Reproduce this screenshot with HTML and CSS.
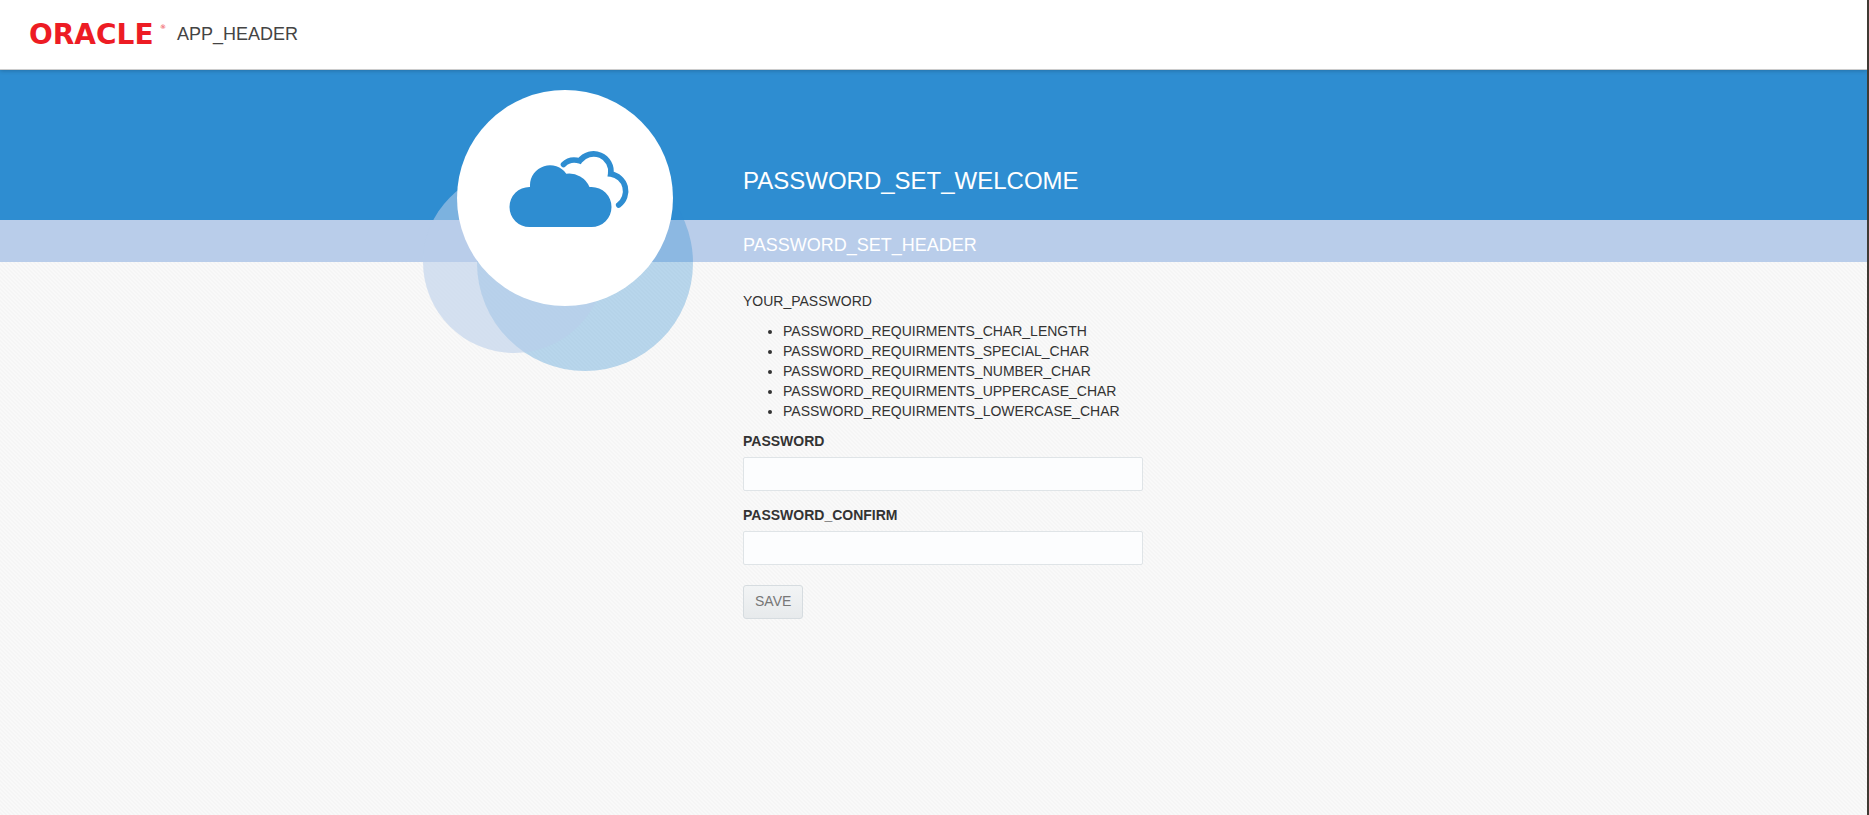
FILE: index.html
```html
<!DOCTYPE html>
<html lang="en">
<head>
<meta charset="utf-8">
<title>APP_HEADER</title>
<link rel="stylesheet" href="styles.css">
</head>
<body>
<header class="site-header">
  <svg class="brand" viewBox="0 0 136 28" role="img" aria-label="Oracle">
    <text class="brand-name" x="0" y="24">ORACLE</text>
    <text class="brand-mark" x="131" y="9">®</text>
  </svg>
  <span class="app-name">APP_HEADER</span>
</header>
<main>
  <section class="welcome">
    <div class="container">
      <svg class="art" viewBox="0 0 270 281" aria-hidden="true">
        <circle cx="162" cy="173" r="108" fill="#2e8dd1" fill-opacity=".32"/>
        <circle cx="91" cy="172" r="91" fill="#b9cdea" fill-opacity=".57"/>
        <circle cx="142" cy="108" r="108" fill="#fff"/>
        <path fill="#2e8dd1" d="M106.500 137a20 20 0 0 1 0-40h.5v-2a20 20 0 0 1 36.300-11.300a22 22 0 0 1 23.200 13.300h2a20 20 0 0 1 0 40z"/>
        <path fill="none" stroke="#2e8dd1" stroke-width="5.600" stroke-linecap="round" d="M140.500 74.500c4-4 10-5.500 16.200-3.600a17.300 17.300 0 0 1 31 13.100a17.300 17.300 0 0 1 8 31"/>
      </svg>
      <h1 class="welcome-title">PASSWORD_SET_WELCOME</h1>
    </div>
  </section>
  <section class="band">
    <div class="container">
      <h2 class="band-title">PASSWORD_SET_HEADER</h2>
    </div>
  </section>
  <div class="container">
    <form class="form">
      <p class="intro">YOUR_PASSWORD</p>
      <ul class="rules">
        <li>PASSWORD_REQUIRMENTS_CHAR_LENGTH</li>
        <li>PASSWORD_REQUIRMENTS_SPECIAL_CHAR</li>
        <li>PASSWORD_REQUIRMENTS_NUMBER_CHAR</li>
        <li>PASSWORD_REQUIRMENTS_UPPERCASE_CHAR</li>
        <li>PASSWORD_REQUIRMENTS_LOWERCASE_CHAR</li>
      </ul>
      <label class="label" for="password">PASSWORD</label>
      <input class="field" id="password" type="password">
      <label class="label" for="confirm">PASSWORD_CONFIRM</label>
      <input class="field" id="confirm" type="password">
      <button class="save" type="submit">SAVE</button>
    </form>
  </div>
</main>
</body>
</html>
```
FILE: styles.css
```css
* { box-sizing: border-box; }

body {
  margin: 0;
  min-height: 100vh;
  border-right: 2px solid #403a33;
  background: linear-gradient(45deg, #f9f9f9 25%, #f5f5f5 25% 50%, #f9f9f9 50% 75%, #f5f5f5 75%) 0 0 / 4px 4px;
  color: #333;
  font: 14px/20px "Liberation Sans", Arial, sans-serif;
}

.site-header {
  position: relative;
  display: flex;
  align-items: center;
  gap: 12px;
  height: 70px;
  padding: 0 29px 2px;
  border-bottom: 1px solid #ccc;
  background: #fff;
  box-shadow: 0 1px 4px rgba(0, 0, 0, .2);
  z-index: 1;
}

.brand { width: 136px; height: 28px; overflow: visible; }
.brand-name { font: bold 28px "DejaVu Sans", sans-serif; fill: #ed1c24; }
.brand-mark { font: 6px "DejaVu Sans", sans-serif; fill: #ed1c24; }

.app-name { font-size: 18px; color: #444; }

.container {
  position: relative;
  max-width: 1021px;
  margin: 0 auto;
  padding-left: 320px;
}

.welcome {
  height: 150px;
  padding-top: 96px;
  background: #2e8dd1;
}

.welcome-title {
  margin: 0;
  color: #fff;
  font-size: 24px;
  font-weight: normal;
  line-height: 30px;
}

.art {
  position: absolute;
  left: 0;
  top: -76px;
  width: 270px;
  height: 281px;
  z-index: 1;
}

.band {
  height: 42px;
  padding-top: 15px;
  background: #b9cdea;
}

.band-title {
  margin: 0;
  color: #fff;
  font-size: 18px;
  font-weight: normal;
  line-height: 20px;
}

.form { max-width: 400px; padding: 29px 0; }

.intro { margin: 0 0 10px; }

.rules { margin: 0 0 10px; padding-left: 40px; }

.label {
  display: block;
  margin-bottom: 6px;
  font-weight: bold;
}

.field {
  display: block;
  width: 100%;
  height: 34px;
  margin: 0 0 14px;
  padding: 6px 10px;
  border: 1px solid #dfe4e7;
  border-radius: 2px;
  background: #fcfdfe;
  font: inherit;
}

.save {
  height: 34px;
  margin-top: 6px;
  padding: 0 11px 2px;
  border: 1px solid #d6dce0;
  border-radius: 3px;
  background: linear-gradient(#f2f4f5, #e7eaec);
  color: #777;
  font: inherit;
}
```
